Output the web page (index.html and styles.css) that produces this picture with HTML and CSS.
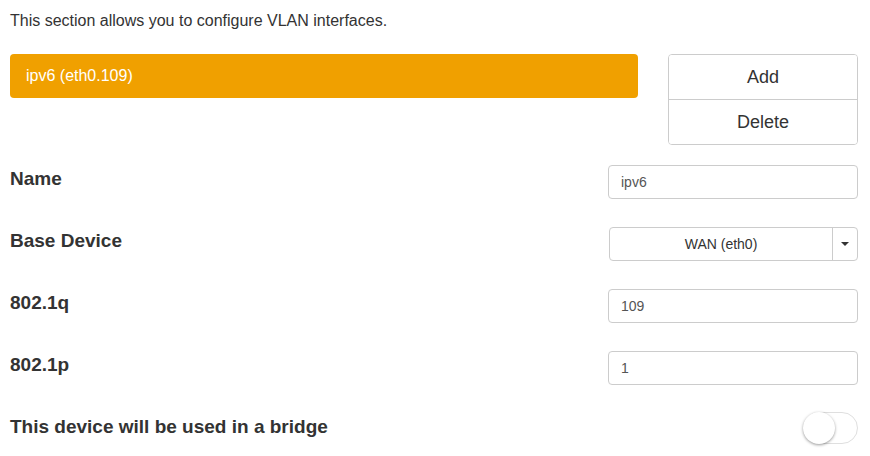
FILE: index.html
```html
<!DOCTYPE html>
<html>
<head>
<meta charset="utf-8">
<link rel="stylesheet" href="styles.css">
</head>
<body>
<div class="page">
  <p class="intro">This section allows you to configure VLAN interfaces.</p>
  <div class="top">
    <div class="list">
      <div class="item active">ipv6 (eth0.109)</div>
    </div>
    <div class="btns">
      <button class="btn">Add</button>
      <button class="btn">Delete</button>
    </div>
  </div>
  <div class="form">
    <div class="row">
      <label class="lbl">Name</label>
      <input class="inp" type="text" value="ipv6">
    </div>
    <div class="row">
      <label class="lbl">Base Device</label>
      <div class="sel">
        <span class="sel-val">WAN (eth0)</span>
        <span class="sel-caret"><span class="caret"></span></span>
      </div>
    </div>
    <div class="row">
      <label class="lbl">802.1q</label>
      <input class="inp" type="text" value="109">
    </div>
    <div class="row">
      <label class="lbl">802.1p</label>
      <input class="inp" type="text" value="1">
    </div>
    <div class="row">
      <label class="lbl">This device will be used in a bridge</label>
      <div class="toggle"><span class="knob"></span></div>
    </div>
  </div>
</div>
</body>
</html>
```
FILE: styles.css
```css
* { box-sizing: border-box; }
html, body { margin: 0; padding: 0; background: #fff; }
body {
  font-family: "Liberation Sans", Arial, sans-serif;
  color: #333;
  width: 870px;
  height: 456px;
  overflow: hidden;
}
.page { padding: 0 12px 0 10px; }
.intro {
  margin: 0;
  padding-top: 10px;
  font-size: 16px;
  line-height: 22px;
  height: 54px;
}
.top {
  display: flex;
  justify-content: space-between;
  align-items: flex-start;
}
.list { width: 628px; }
.item {
  height: 44px;
  border-radius: 4px;
  padding: 0 16px;
  display: flex;
  align-items: center;
  font-size: 16px;
}
.item.active { background: #f0a000; color: #fff; }
.btns {
  width: 190px;
  display: flex;
  flex-direction: column;
  border: 1px solid #ccc;
  border-radius: 4px;
  overflow: hidden;
}
.btn {
  font-family: "Liberation Sans", Arial, sans-serif;
  font-size: 18px;
  color: #333;
  background: #fff;
  border: none;
  height: 44px;
  padding: 0;
}
.btn + .btn { border-top: 1px solid #ccc; height: 45px; }
.form { margin-top: 20px; }
.row {
  display: flex;
  justify-content: space-between;
  align-items: flex-start;
  height: 34px;
  margin-bottom: 28px;
}
.lbl {
  font-weight: bold;
  font-size: 19px;
  line-height: 28px;
}
.inp {
  width: 250px;
  height: 34px;
  border: 1px solid #ccc;
  border-radius: 4px;
  padding: 0 12px;
  font-family: "Liberation Sans", Arial, sans-serif;
  font-size: 14px;
  color: #555;
  background: #fff;
  outline: none;
}
.sel {
  width: 249px;
  height: 34px;
  border: 1px solid #ccc;
  border-radius: 4px;
  display: flex;
  font-size: 14px;
  color: #333;
}
.sel-val {
  flex: 1;
  display: flex;
  align-items: center;
  justify-content: center;
}
.sel-caret {
  width: 25px;
  border-left: 1px solid #ccc;
  display: flex;
  align-items: center;
  justify-content: center;
}
.caret {
  width: 0;
  height: 0;
  border-left: 4px solid transparent;
  border-right: 4px solid transparent;
  border-top: 4px solid #333;
}
.toggle {
  width: 55px;
  height: 32px;
  border: 1px solid #dfdfdf;
  border-radius: 16px;
  position: relative;
  background: #fff;
  margin-top: -1px;
}
.knob {
  position: absolute;
  left: -1px;
  top: -1px;
  width: 32px;
  height: 32px;
  border-radius: 50%;
  background: #fff;
  box-shadow: 0 1px 3px rgba(0,0,0,0.4);
}
```
